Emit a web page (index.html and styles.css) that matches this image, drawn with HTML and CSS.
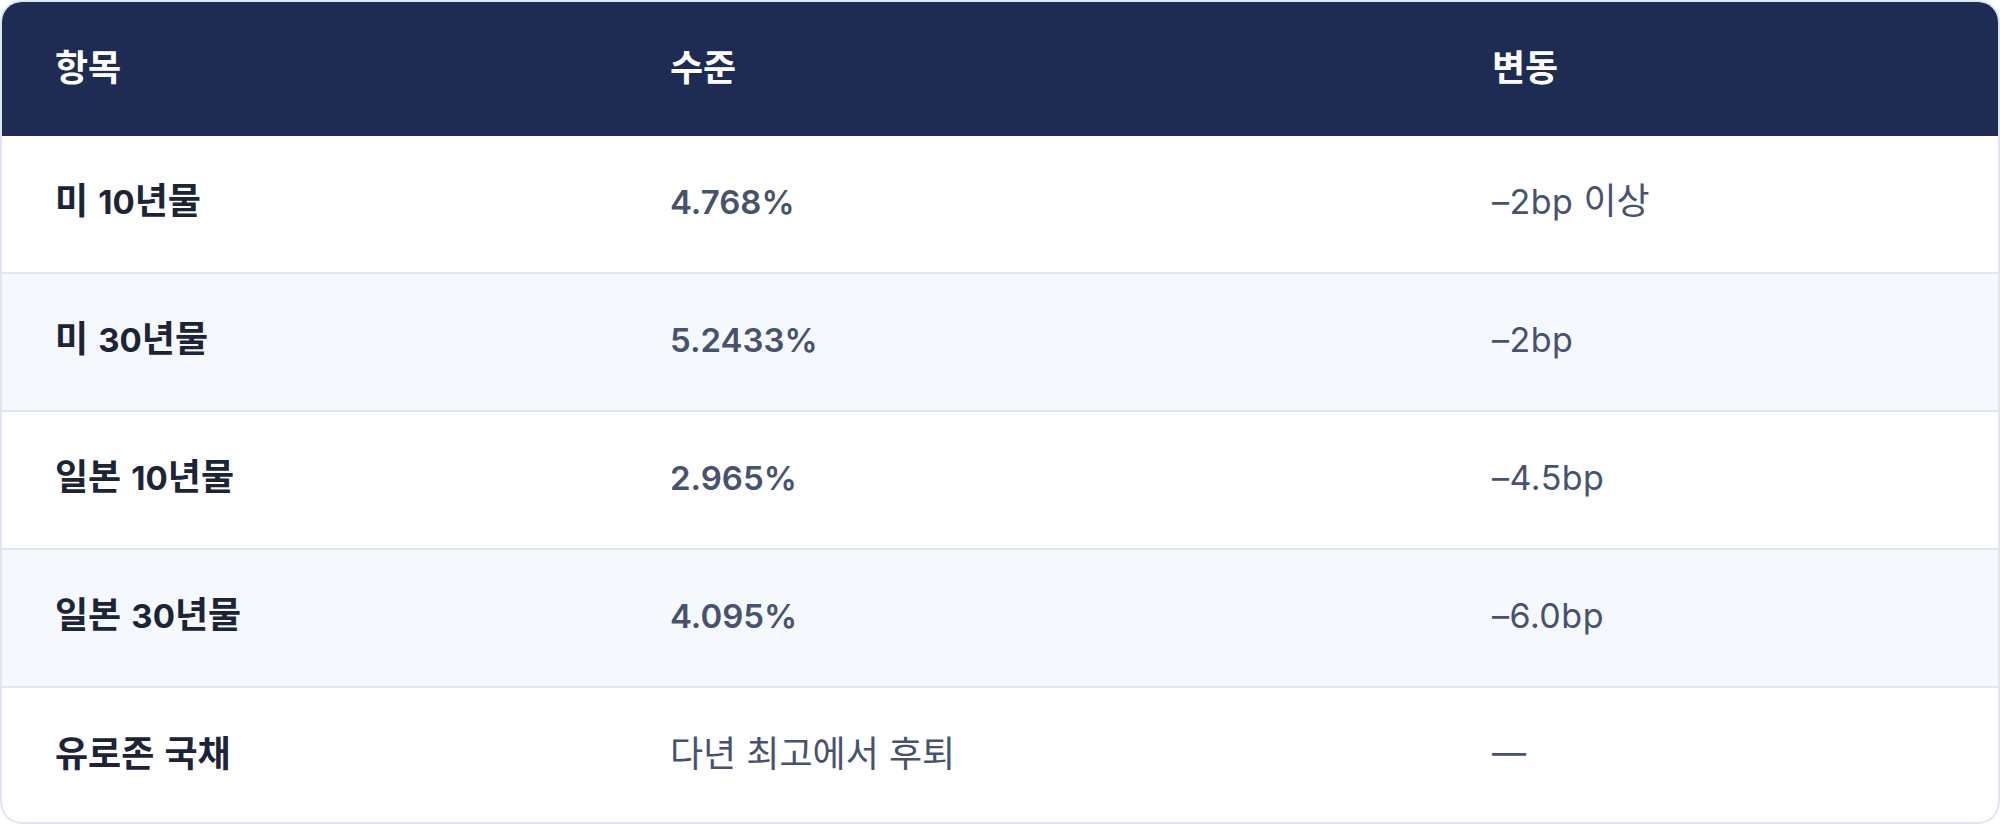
FILE: index.html
```html
<!DOCTYPE html>
<html lang="ko">
<head>
<meta charset="utf-8">
<link rel="stylesheet" href="styles.css">
</head>
<body>
<div class="table">
  <div class="row head">
    <div class="cell">항목</div>
    <div class="cell">수준</div>
    <div class="cell">변동</div>
  </div>
  <div class="row">
    <div class="cell name">미 <span class="n">10</span>년물</div>
    <div class="cell level"><span class="n">4.768%</span></div>
    <div class="cell change"><span class="n">–2bp</span> 이상</div>
  </div>
  <div class="row alt">
    <div class="cell name">미 <span class="n">30</span>년물</div>
    <div class="cell level"><span class="n">5.2433%</span></div>
    <div class="cell change"><span class="n">–2bp</span></div>
  </div>
  <div class="row">
    <div class="cell name">일본 <span class="n">10</span>년물</div>
    <div class="cell level"><span class="n">2.965%</span></div>
    <div class="cell change"><span class="n">–4.5bp</span></div>
  </div>
  <div class="row alt">
    <div class="cell name">일본 <span class="n">30</span>년물</div>
    <div class="cell level"><span class="n">4.095%</span></div>
    <div class="cell change"><span class="n">–6.0bp</span></div>
  </div>
  <div class="row last">
    <div class="cell name">유로존 국채</div>
    <div class="cell change">다년 최고에서 후퇴</div>
    <div class="cell change"><span class="n">—</span></div>
  </div>
</div>
</body>
</html>
```

FILE: styles.css
```css
* { box-sizing: border-box; }
html, body { margin: 0; padding: 0; background: #ffffff; }
body {
  font-family: "Noto Sans CJK KR", "Noto Sans", sans-serif;
  width: 2000px;
  height: 824px;
}
.table {
  width: 2000px;
  height: 824px;
  border: 2px solid #dfe5f2;
  border-radius: 22px;
  overflow: hidden;
  display: flex;
  flex-direction: column;
}
.row {
  display: grid;
  grid-template-columns: 615px 822px 1fr;
  height: 138px;
  border-bottom: 2px solid #dfe5f2;
  align-items: center;
}
.row.head {
  height: 134px;
  background: #1e2c54;
  border-bottom: none;
}
.row.alt { background: #f5f8fd; }
.row.last { border-bottom: none; flex: 1; }
.cell {
  padding: 0 53px 8px;
  font-size: 36px;
  line-height: 50px;
}
.n {
  font-family: "Inter", "Noto Sans CJK KR", sans-serif;
  font-size: 33px;
}
.change .n {
  font-size: 34px;
  letter-spacing: 0.5px;
}
.head .cell {
  color: #ffffff;
  font-weight: 700;
}
.name { color: #1c2436; font-weight: 700; }
.level { color: #47536e; font-weight: 600; }
.change { color: #47536e; font-weight: 400; }
```
